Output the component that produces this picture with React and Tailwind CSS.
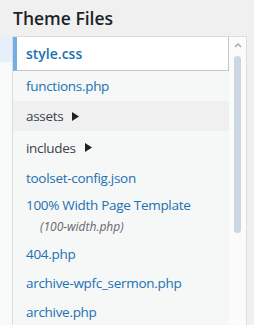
import React from "react";

const files = [
  { name: "functions.php", h: "h-[30px]" },
  { name: "assets", folder: true, hover: true, h: "h-[30px]" },
  { name: "includes", folder: true, h: "h-[33px]" },
  { name: "toolset-config.json", h: "h-[27px]" },
  { name: "100% Width Page Template", sub: "(100-width.php)", h: "h-[48px]" },
  { name: "404.php", h: "h-[30px]" },
  { name: "archive-wpfc_sermon.php", h: "h-[28px]" },
  { name: "archive.php", h: "h-[29px]" },
];

const Caret = () => (
  <svg width="7" height="9" viewBox="0 0 7 9" className="ml-[9px]">
    <path d="M0 0 L7 4.5 L0 9 Z" fill="#1d2327" />
  </svg>
);

export default function App() {
  return (
    <div
      className="w-[254px] h-[325px] bg-[#f0f0f1] overflow-hidden flex flex-col"
      style={{ fontFamily: '"Open Sans", "Noto Sans", sans-serif' }}
    >
      <div className="h-[36px] shrink-0 pl-[13px] pt-[6px]">
        <h2 className="text-[17.5px] font-semibold text-[#1d2327] leading-[24px]">
          Theme Files
        </h2>
      </div>

      <div className="flex flex-1 min-h-0">
        {/* editor strip on the left */}
        <div className="w-[12px] bg-[#f8f9f9]">
          <div className="h-[26px] bg-[#e6f0fa]"></div>
        </div>

        <div className="flex flex-1 mr-[7px] border-l border-t border-r border-[#dcdcde] min-h-0">
          <ul className="flex-1 bg-[#f6f7f7] overflow-hidden">
            <li className="h-[34px] flex items-center bg-white border-b border-r border-[#c3c4c7] border-l-4 border-l-[#72aee6] pl-[9px]">
              <span className="text-[14px] font-semibold text-[#2271b1]">style.css</span>
            </li>
            {files.map((f) => (
              <li
                key={f.name}
                className={`${f.h} ${f.hover ? "bg-[#f0f0f1]" : ""} flex flex-col justify-center pl-[13px]`}
              >
                {f.folder ? (
                  <div className="flex items-center text-[13.5px] tracking-[-0.3px] text-[#3c434a] leading-[18px]">
                    {f.name}
                    <Caret />
                  </div>
                ) : (
                  <span className="text-[13.5px] tracking-[-0.3px] text-[#2271b1] leading-[18px] whitespace-nowrap">
                    {f.name}
                  </span>
                )}
                {f.sub && (
                  <span className="text-[12px] italic text-[#646970] pl-[14px] mt-[5px] leading-[16px]">
                    {f.sub}
                  </span>
                )}
              </li>
            ))}
          </ul>

          {/* scrollbar */}
          <div className="w-[17px] bg-[#fbfbfb] flex flex-col items-center pt-[5px]">
            <svg width="8" height="6" viewBox="0 0 8 6">
              <path d="M1 5 L4 2 L7 5" stroke="#a7aaad" strokeWidth="1.5" fill="none" />
            </svg>
            <div className="w-[7px] h-[177px] mt-[8px] rounded-[4px] bg-[#cdd7e1]"></div>
          </div>
        </div>
      </div>
    </div>
  );
}
